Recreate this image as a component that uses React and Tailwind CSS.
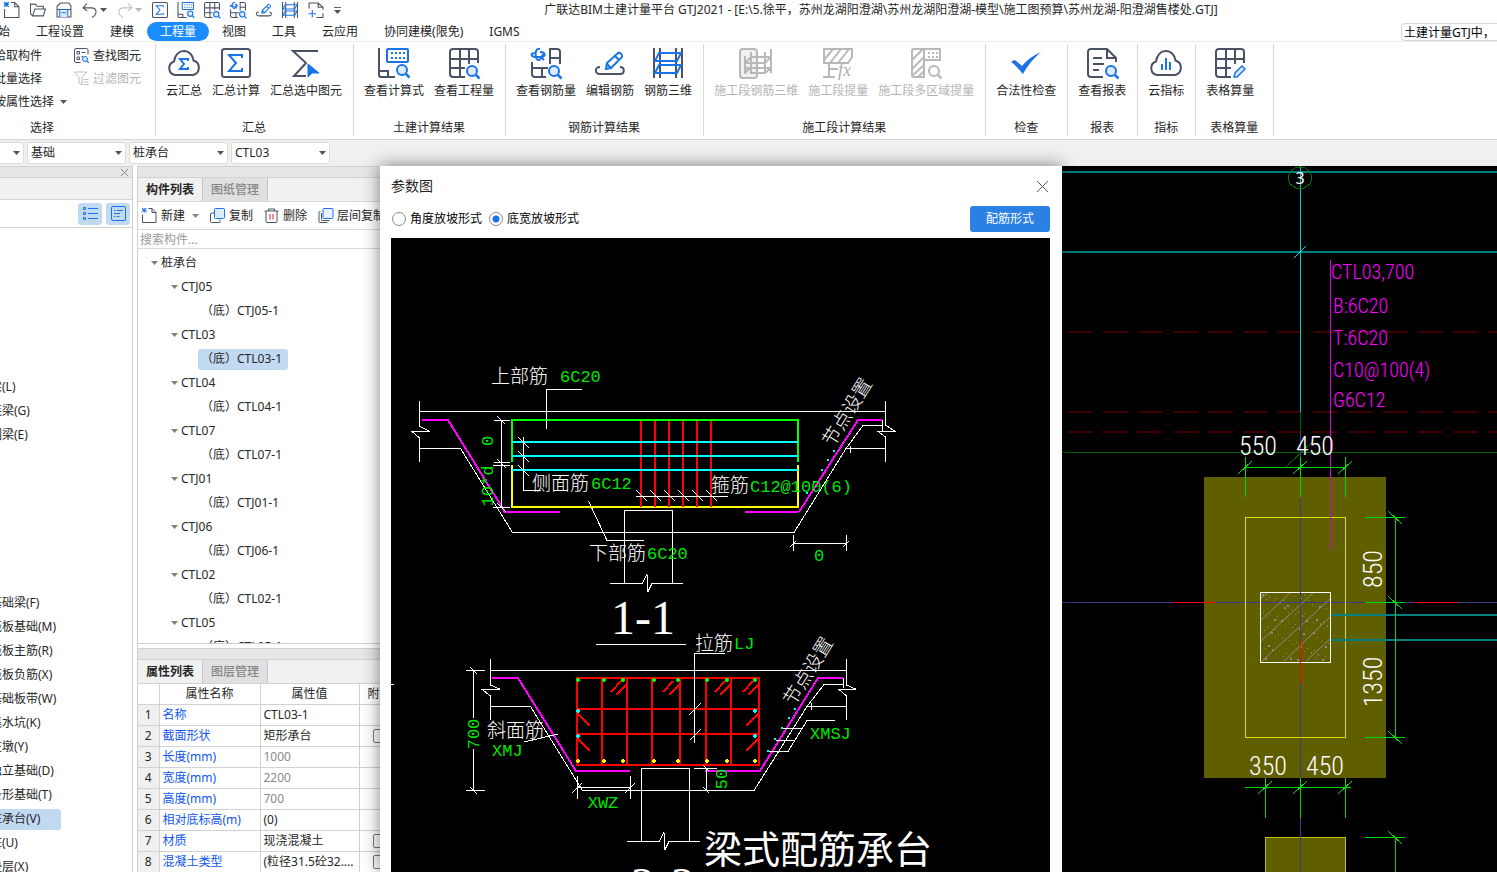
import { useState } from 'react';

const DARK = '#4b5266';
const BLUE = '#1a73e8';

function Icon({ size = 30, children, color = DARK }) {
  return (
    <svg width={size} height={size} viewBox="0 0 30 30" fill="none" stroke={color} strokeWidth="2" className="shrink-0 overflow-visible" aria-hidden="true">
      {children}
    </svg>
  );
}

function Caret({ color = '#555555' }) {
  return (
    <svg width="7" height="4" viewBox="0 0 7 4" className="shrink-0" aria-hidden="true">
      <path d="M0 0h7L3.500 4z" fill={color} />
    </svg>
  );
}

function Lens({ cx = 23, cy = 23, color = BLUE, fill = '#dcebff' }) {
  return (
    <g stroke={color}>
      <circle cx={cx} cy={cy} r="5" fill={fill} />
      <path d={`M${cx + 4} ${cy + 4}l3.500 3.500`} strokeWidth="2.500" />
    </g>
  );
}

const CLOUD = 'M6 27a7 7 0 0 1-1-13.500C6 7 10 3 15 3s9 4 9.500 9.500A7.500 7.500 0 0 1 24 27Z';
const GRID = 'M29 15V4a3 3 0 0 0-3-3H4a3 3 0 0 0-3 3v22a3 3 0 0 0 3 3h12M1 11h28M1 20h15M11 1v28M20 1v15';

const icons = {
  cloudSum: (p) => (
    <Icon {...p}>
      <path d={CLOUD} />
      <path d="M19 13v-2h-8l4 5-4 5h8v-2" stroke={BLUE} />
    </Icon>
  ),
  sum: (p) => (
    <Icon {...p}>
      <rect x="1" y="1" width="28" height="28" rx="2.500" />
      <path d="M21 10V7H8l7 8-7 8h13v-3" stroke={BLUE} />
    </Icon>
  ),
  sumSelect: (p) => (
    <Icon {...p}>
      <path d="M27 3H2l13 12L3 28h12" />
      <path d="M17 16v13l4-4h7z" fill={BLUE} stroke={BLUE} strokeWidth="1" />
    </Icon>
  ),
  formula: (p) => (
    <Icon {...p}>
      <path d="M0 0v27a2 2 0 0 0 2 2h14M1 23h8v6" />
      <rect x="8" y="1" width="21" height="13" rx="1" stroke={BLUE} />
      <path d="M12 5h15M12 10h15" stroke={BLUE} strokeDasharray="2 2" />
      <Lens cy={22} />
    </Icon>
  ),
  quantity: (p) => (
    <Icon {...p}>
      <path d={GRID} />
      <Lens />
    </Icon>
  ),
  rebarQuantity: (p) => (
    <Icon {...p}>
      <path d="M19 16V1h7a3 3 0 0 1 3 3v12M19 10h10M1 14v12a3 3 0 0 0 3 3h11M1 20h16M11 20v9" />
      <path d="M9 1C5 0 4 4 5 9c1 4 4 4 5 1M4 5C0 5-1 8 4 9h6M9 4c6 0 6 5 1 5l3-3M10 9l3 3" stroke={BLUE} />
      <Lens />
    </Icon>
  ),
  editRebar: (p) => (
    <Icon {...p}>
      <path d="M5 19c-6 0-5 7 0 7h20c5 0 5-7 0-7" />
      <path d="M11 21l1-6L23 5c2-1 5 2 4 4L16 20zM20 8l4 4M12 16l4 4" stroke={BLUE} />
    </Icon>
  ),
  rebar3d: (p) => (
    <Icon {...p}>
      <path d="M1 0v30M7 0v30M23 0v30M29 0v30" />
      <path d="M6 5h22l-4 8H2zM6 17h22l-4 8H2z" stroke={BLUE} />
    </Icon>
  ),
  stage3d: (p) => (
    <Icon {...p} color="#b8b8b8">
      <rect x="-1" y="1" width="17" height="29" rx="3" fill="#f0f0f0" />
      <path d="M4 8v18M10 4v22M24 4v22M30 1v24M4 15l6-6h20M4 20h26M4 25l6-6M4 15h10M30 9l-6 6H14M30 20l-6 5H10" />
    </Icon>
  ),
  stageFx: (p) => (
    <Icon {...p} color="#b8b8b8">
      <path d="M1 1h28v8l-4 6H1zM1 12L10 1M7 15L18 1M15 15L26 1M6 15v14M0 29h12M6 21h9" />
      <text x="15" y="28" fontSize="18" fontStyle="italic" fontFamily="Liberation Serif, serif" fill="#b0b0b0" stroke="none">fx</text>
    </Icon>
  ),
  stageArea: (p) => (
    <Icon {...p} color="#b8b8b8">
      <path d="M13 1H3a2 2 0 0 0-2 2v24a2 2 0 0 0 2 2h10zM13 1h16v11H13M1 12L12 1M1 21l12-12M1 28l12-11M7 29l6-6" />
      <path d="M17 5h10M17 9h10" strokeDasharray="2 2" />
      <Lens color="#b8b8b8" fill="#fff" />
    </Icon>
  ),
  check: (p) => (
    <Icon {...p}>
      <path d="M0 13.500 4 12l7 6C17 11 23 7 30 4 22 11 17 17 12 26 8 21 4 17 0 13.500Z" fill={BLUE} stroke="none" />
    </Icon>
  ),
  report: (p) => (
    <Icon {...p}>
      <path d="M29 14v-4l-9-9H4a3 3 0 0 0-3 3v22a3 3 0 0 0 3 3h12M20 1v9h9M6 10h9M6 16h11M6 22h6" />
      <Lens cx={24} />
    </Icon>
  ),
  cloudChart: (p) => (
    <Icon {...p}>
      <path d={CLOUD} />
      <path d="M11 22v-6M15 22V10M19 22v-8" stroke={BLUE} />
    </Icon>
  ),
  tableEdit: (p) => (
    <Icon {...p}>
      <path d={GRID} />
      <path d="M19 29l1-4 7-7 3 3-8 8z" stroke={BLUE} strokeWidth="1.500" fill="#dcebff" />
    </Icon>
  ),
  newFile: (p) => (
    <Icon {...p}>
      <path d="M1 13v16h27V9l-8-8h-7M20 1v8h8" />
      <path d="M0 0l9 9M9 0L0 9M4.500 0v9M0 4.500h9" stroke={BLUE} />
    </Icon>
  ),
  open: (p) => (
    <Icon {...p}>
      <path d="M5 26L1 22V4h9l3 4h12v5M5 26l4-13h20l-4 13z" />
    </Icon>
  ),
  save: (p) => (
    <Icon {...p}>
      <path d="M27 28H2V8l6-6h16l4 5v21zM2 14h26" />
      <path d="M7 28V14h15v14M10 20h9" stroke={BLUE} fill="#dcebff" />
    </Icon>
  ),
  undo: (p) => (
    <Icon {...p}>
      <path d="M9 3L2 11l8 6M2 11h15c12 0 12 12 2 18" />
    </Icon>
  ),
  redo: (p) => (
    <Icon {...p} color="#c4c4c4">
      <path d="M21 3l7 8-8 6M28 11H13C1 11 1 23 11 29" />
    </Icon>
  ),
  addFrame: (p) => (
    <Icon {...p}>
      <path d="M2 12V2h17l9 8v5M19 2v8h9M28 21v8H16" />
      <path d="M1 22h14M8 15v14" stroke={BLUE} />
    </Icon>
  ),
  find: (p) => (
    <Icon {...p}>
      <path d="M28 13V4a3 3 0 0 0-3-3H4a3 3 0 0 0-3 3v22a3 3 0 0 0 3 3h9M6 7h5v5H6zM15 9h8M6 18h5v5H6zM15 17h3" />
      <Lens cx={22} cy={22} />
    </Icon>
  ),
  filter: (p) => (
    <Icon {...p} color="#c0c0c0">
      <path d="M1 2h24L16 13v15l-6-4V13zM19 17h10M19 22h10M19 27h10" />
    </Icon>
  ),
  copy: (p) => (
    <Icon {...p}>
      <path d="M8 10H3a2 2 0 0 0-2 2v15a2 2 0 0 0 2 2h15a2 2 0 0 0 2-2v-4" />
      <rect x="9" y="1" width="20" height="20" rx="2" stroke={BLUE} fill="#dcebff" />
    </Icon>
  ),
  layerCopy: (p) => (
    <Icon {...p}>
      <path d="M5 7H3a2 2 0 0 0-1 2v18a2 2 0 0 0 2 2h15M7 10v13a2 2 0 0 0 2 2h14" />
      <rect x="10" y="1" width="20" height="20" rx="2" stroke={BLUE} fill="#eaf3ff" />
    </Icon>
  ),
  trash: (p) => (
    <Icon {...p}>
      <path d="M1 6h28M9 6V2h12v4M4 6v21a2 2 0 0 0 2 2h18a2 2 0 0 0 2-2V6" />
      <path d="M12 12v11M18 12v11" stroke="#d9202a" />
    </Icon>
  ),
  list: (p) => (
    <Icon {...p} color={BLUE}>
      <path d="M10 5h20M10 15h20M10 25h20M1 3h4v4H1zM1 13h4v4H1zM1 23h4v4H1z" />
    </Icon>
  ),
  card: (p) => (
    <Icon {...p} color={BLUE}>
      <rect x="1" y="1" width="28" height="28" rx="3" />
      <path d="M6 9h3M12 9h12M6 15h12M6 21h3M12 21h5" />
    </Icon>
  ),
};

const menuTabs = ['开始', '工程设置', '建模', '工程量', '视图', '工具', '云应用', '协同建模(限免)', 'IGMS'];

const ribbonGroups = [
  { title: '汇总', items: [['cloudSum', '云汇总'], ['sum', '汇总计算'], ['sumSelect', '汇总选中图元']] },
  { title: '土建计算结果', items: [['formula', '查看计算式'], ['quantity', '查看工程量']] },
  { title: '钢筋计算结果', items: [['rebarQuantity', '查看钢筋量'], ['editRebar', '编辑钢筋'], ['rebar3d', '钢筋三维']] },
  { title: '施工段计算结果', disabled: true, items: [['stage3d', '施工段钢筋三维'], ['stageFx', '施工段提量'], ['stageArea', '施工段多区域提量']] },
  { title: '检查', items: [['check', '合法性检查']] },
  { title: '报表', items: [['report', '查看报表']] },
  { title: '指标', items: [['cloudChart', '云指标']] },
  { title: '表格算量', wide: true, items: [['tableEdit', '表格算量']] },
];

const filters = [
  { label: '楼层', value: '基础层' },
  { label: '分类', value: '基础' },
  { label: '构件类型', value: '桩承台' },
  { label: '构件', value: 'CTL03' },
];

const beams = ['梁(L)', '连梁(G)', '圈梁(E)'];
const foundations = [
  '基础梁(F)', '筏板基础(M)', '筏板主筋(R)', '筏板负筋(X)', '基础板带(W)', '集水坑(K)',
  '柱墩(Y)', '独立基础(D)', '条形基础(T)', '桩承台(V)', '桩(U)', '垫层(X)',
];

const components = ['CTJ05', 'CTL03', 'CTL04', 'CTL07', 'CTJ01', 'CTJ06', 'CTL02', 'CTL05'];

const properties = [
  { name: '名称', value: 'CTL03-1' },
  { name: '截面形状', value: '矩形承台', extra: true },
  { name: '长度(mm)', value: '1000', muted: true },
  { name: '宽度(mm)', value: '2200', muted: true },
  { name: '高度(mm)', value: '700', muted: true },
  { name: '相对底标高(m)', value: '(0)' },
  { name: '材质', value: '现浇混凝土', extra: true },
  { name: '混凝土类型', value: '(粒径31.5砼32....', extra: true },
];

function QuickButton({ name, label }) {
  const Glyph = icons[name];
  return (
    <button type="button" aria-label={label}>
      <Glyph size={16} />
    </button>
  );
}

function TitleBar() {
  return (
    <header className="flex h-[22px] items-center pb-[2px] pl-1">
      <div className="flex items-center gap-[10px]">
        <QuickButton name="newFile" label="新建" />
        <QuickButton name="open" label="打开" />
        <QuickButton name="save" label="保存" />
        <span className="flex items-center gap-[2px]">
          <QuickButton name="undo" label="撤销" />
          <Caret />
        </span>
        <span className="flex items-center gap-[2px]">
          <QuickButton name="redo" label="恢复" />
          <Caret color="#b5b5b5" />
        </span>
        <QuickButton name="sum" label="汇总计算" />
        <QuickButton name="formula" label="查看计算式" />
        <QuickButton name="quantity" label="查看工程量" />
        <QuickButton name="rebarQuantity" label="查看钢筋量" />
        <QuickButton name="editRebar" label="编辑钢筋" />
        <QuickButton name="rebar3d" label="钢筋三维" />
        <QuickButton name="addFrame" label="添加" />
        <span className="flex flex-col gap-[2px]">
          <span className="h-px w-[7px] bg-[#666]" />
          <Caret />
        </span>
      </div>
      <h1 className="flex-1 truncate pr-[76px] text-center">
        广联达BIM土建计量平台 GTJ2021 - [E:\5.徐平，苏州龙湖阳澄湖\苏州龙湖阳澄湖-模型\施工图预算\苏州龙湖-阳澄湖售楼处.GTJ]
      </h1>
    </header>
  );
}

function MenuTabs({ active, onSelect }) {
  return (
    <nav className="flex h-5 items-center justify-between border-b border-[#ececec]">
      <div className="-ml-[27px] flex">
        {menuTabs.map((tab) => (
          <button
            key={tab}
            type="button"
            onClick={() => onSelect(tab)}
            className={`h-[19px] rounded-full px-[13px] ${tab === active ? 'bg-[#1a8cff] text-white' : ''}`}
          >
            {tab}
          </button>
        ))}
      </div>
      <input
        aria-label="搜索"
        defaultValue="土建计量GTJ中，"
        className="h-[18px] w-24 rounded-l-sm border border-r-0 border-[#d9d9d9] pl-[2px] text-black outline-none"
      />
    </nav>
  );
}

function Ribbon() {
  return (
    <section className="flex h-[98px] items-start border-b border-[#d5d5d5] pt-[2px]">
      <div className="flex h-[92px] w-[156px] shrink-0 flex-col justify-between border-r border-[#d9d9d9]">
        <div className="-ml-[6px] flex">
          <div className="flex w-[80px] flex-col items-start">
            <button type="button" className="h-[23px]">拾取构件</button>
            <button type="button" className="h-[23px]">批量选择</button>
            <button type="button" className="flex h-[23px] items-center gap-[6px]">
              按属性选择 <Caret />
            </button>
          </div>
          <div className="flex flex-col items-start">
            <button type="button" className="flex h-[23px] items-center gap-1">
              <icons.find size={15} /> 查找图元
            </button>
            <button type="button" disabled className="flex h-[23px] items-center gap-1 text-[#b5b5b5]">
              <icons.filter size={15} /> 过滤图元
            </button>
          </div>
        </div>
        <p className="pl-[30px]">选择</p>
      </div>

      {ribbonGroups.map((group) => (
        <div
          key={group.title}
          className={`flex h-[92px] shrink-0 flex-col justify-between border-r border-[#d9d9d9] pt-1 pr-[11px] pl-[10px] ${group.wide ? 'w-[78px]' : ''}`}
        >
          <div className="flex gap-[10px]">
            {group.items.map(([name, label]) => {
              const Glyph = icons[name];
              return (
                <button
                  key={label}
                  type="button"
                  disabled={group.disabled}
                  className={`flex flex-col items-center gap-[5px] ${group.disabled ? 'text-[#b5b5b5]' : ''}`}
                >
                  <Glyph />
                  {label}
                </button>
              );
            })}
          </div>
          <p className="text-center">{group.title}</p>
        </div>
      ))}
    </section>
  );
}

function FilterBar() {
  return (
    <section className="flex h-[26px] items-center bg-[#f0f0f0]">
      <div className="-ml-[75px] flex gap-[3px]">
        {filters.map((f) => (
          <label key={f.label} className="relative block">
            <select
              aria-label={f.label}
              className="h-[22px] w-[99px] appearance-none rounded-[3px] border border-[#dcdcdc] bg-white pl-[3px] outline-none"
            >
              <option>{f.value}</option>
            </select>
            <span className="pointer-events-none absolute top-[9px] right-1">
              <Caret />
            </span>
          </label>
        ))}
      </div>
    </section>
  );
}

function NavItem({ label, selected }) {
  return (
    <li className="flex h-6 items-center">
      <button
        type="button"
        className={`-ml-[10px] h-[21px] rounded-[3px] ${selected ? 'w-[71px] bg-[#c2d9f2] text-left' : ''}`}
      >
        {label}
      </button>
    </li>
  );
}

function Sidebar() {
  return (
    <aside className="flex w-[133px] shrink-0 flex-col overflow-hidden border-r border-[#cfcfcf]">
      <div className="flex h-3 shrink-0 items-center justify-end border-y border-[#d2d2d2] bg-[#e6e6e6] pr-1">
        <button type="button" aria-label="关闭">
          <svg width="7" height="7" viewBox="0 0 7 7" stroke="#888" aria-hidden="true">
            <path d="M0 0l7 7M7 0L0 7" />
          </svg>
        </button>
      </div>
      <div className="h-[22px] shrink-0 border-b border-[#d2d2d2] bg-[#f1f1f1]" />
      <div className="flex h-7 shrink-0 items-center justify-end gap-1 border-b border-[#d2d2d2] pr-[2px]">
        <button type="button" aria-label="列表" className="flex h-[22px] w-6 items-center justify-center rounded-[3px] bg-[#c2d9f2]">
          <icons.list size={15} />
        </button>
        <button type="button" aria-label="卡片" className="flex h-[22px] w-6 items-center justify-center rounded-[3px] bg-[#c2d9f2]">
          <icons.card size={15} />
        </button>
      </div>
      <ul className="pt-[147px]">
        {beams.map((b) => <NavItem key={b} label={b} />)}
      </ul>
      <ul className="pt-36">
        {foundations.map((f) => <NavItem key={f} label={f} selected={f === '桩承台(V)'} />)}
      </ul>
    </aside>
  );
}

function PanelTabs({ first, second }) {
  return (
    <>
      <div className="h-3 shrink-0 border-y border-[#d2d2d2] bg-[#e6e6e6]" />
      <div className="flex h-[23px] shrink-0 bg-[#f1f1f1]">
        <button type="button" className="w-[65px] border-r border-[#c4c4cc] bg-[#f1f1f1] font-bold">{first}</button>
        <button type="button" className="w-[65px] border-r border-[#c4c4cc] bg-[#e0e0e0] font-medium text-[#888]">{second}</button>
      </div>
    </>
  );
}

function ToolButton({ name, label, caret }) {
  const Glyph = icons[name];
  return (
    <button type="button" className="flex shrink-0 items-center gap-1">
      <Glyph size={15} />
      {label}
      {caret && <span className="pl-[3px]"><Caret color="#888888" /></span>}
    </button>
  );
}

function ComponentTree() {
  const [selected, setSelected] = useState('CTL03');

  return (
    <div className="flex min-h-0 flex-1 flex-col overflow-hidden border-b border-[#cfcfcf]">
      <PanelTabs first="构件列表" second="图纸管理" />
      <div className="flex h-[29px] shrink-0 items-center gap-[11px] border-y border-[#d9d9d9] pl-1 whitespace-nowrap">
        <ToolButton name="newFile" label="新建" caret />
        <ToolButton name="copy" label="复制" />
        <ToolButton name="trash" label="删除" />
        <ToolButton name="layerCopy" label="层间复制" />
      </div>
      <input
        aria-label="搜索构件"
        placeholder="搜索构件..."
        className="h-[19px] shrink-0 border-b border-[#d9d9d9] pl-[2px] outline-none placeholder:text-[#999]"
      />
      <ul className="pt-[2px]">
        <li>
          <span className="flex h-6 items-center gap-[3px] pl-[13px]">
            <Caret color="#808080" /> 桩承台
          </span>
          <ul>
            {components.map((c) => (
              <li key={c}>
                <span className="flex h-6 items-center gap-[3px] pl-[33px]">
                  <Caret color="#808080" /> {c}
                </span>
                <div className="flex h-6 items-center pl-[60px]">
                  <button
                    type="button"
                    onClick={() => setSelected(c)}
                    className={`h-[21px] w-[90px] rounded-[3px] pl-[3px] text-left whitespace-nowrap ${c === selected ? 'bg-[#c2d9f2]' : ''}`}
                  >
                    （底）{c}-1
                  </button>
                </div>
              </li>
            ))}
          </ul>
        </li>
      </ul>
    </div>
  );
}

function PropertyTable() {
  return (
    <div className="flex h-[224px] shrink-0 flex-col overflow-hidden">
      <PanelTabs first="属性列表" second="图层管理" />
      <table className="w-[261px] table-fixed border-collapse border-t border-[#d2d2d2]">
        <thead>
          <tr className="h-[21px]">
            <th className="w-[21px] border-r border-b border-[#d2d2d2]" />
            <th className="w-[101px] border-r border-b border-[#d2d2d2] font-normal">属性名称</th>
            <th className="w-[99px] border-r border-b border-[#d2d2d2] font-normal">属性值</th>
            <th className="w-[40px] border-b border-[#d2d2d2] pl-[8px] text-left font-normal">附加</th>
          </tr>
        </thead>
        <tbody>
          {properties.map((p, i) => (
            <tr key={p.name} className="h-[21px]">
              <td className="border-r border-b border-[#d2d2d2] bg-[#f0f0f0] text-center">{i + 1}</td>
              <td className="border-r border-b border-[#d2d2d2] pl-[3px] text-[#0f56f0]">{p.name}</td>
              <td className={`border-r border-b border-[#d2d2d2] pl-[3px] whitespace-nowrap ${p.muted ? 'text-[#8a8a8a]' : ''}`}>{p.value}</td>
              <td className="border-b border-[#d2d2d2] pl-[13px]">
                {p.extra && (
                  <input
                    type="checkbox"
                    aria-label={`附加${p.name}`}
                    className="block h-[14px] w-[14px] appearance-none rounded-[2px] border border-[#777] bg-white"
                  />
                )}
              </td>
            </tr>
          ))}
        </tbody>
      </table>
    </div>
  );
}

const CJK = 'Noto Sans CJK SC, sans-serif';
const MONO = 'Liberation Mono, monospace';
const NARROW = 'Liberation Sans Narrow, Roboto Condensed, Roboto, sans-serif';

// y is the middle of the line of text
function Note({ x, y, children, fill = '#fff', size = 19, font = CJK, rotate = 0, anchor = 'start', weight = 300 }) {
  return (
    <text
      x={x}
      y={y}
      dy="0.36em"
      fill={fill}
      stroke="none"
      fontSize={size}
      fontFamily={font}
      fontWeight={weight}
      textAnchor={anchor}
      transform={rotate ? `rotate(${rotate} ${x} ${y})` : undefined}
    >
      {children}
    </text>
  );
}

function Value(props) {
  return <Note fill="#00e600" size={17} font={MONO} {...props} />;
}

function Dots({ points, fill, r = 2 }) {
  return points.map(([x, y]) => (
    <path key={`${x}-${y}`} d={`M${x - r} ${y}l${r} ${-r} ${r} ${r} ${-r} ${r}z`} fill={fill} stroke={fill} strokeWidth="1" />
  ));
}

const barXs = [641, 655, 669, 683, 697, 711];
const mainXs = [578, 604, 623, 654, 678, 707, 727, 755];

function LongSection() {
  return (
    <g strokeWidth="1" stroke="#fff" fill="none" shapeRendering="crispEdges">
      <path d="M419.500 411.500H885.500M419.500 401v25l9 5h-17l8 7v24M885.500 401v24l9 6h-17l8 6v25M882.500 420v11" />
      <path d="M419.500 448.500h41l52 84H794l52-84h39.500M846 448.500l17-23h19M850 446v7" />
      <g stroke="#f0f" strokeWidth="2">
        <path d="M422 420h26l57 92h55M745 512h53M799 512l59-92h24" />
      </g>
      <path d="M512 462V420H798V462" stroke="#0f0" strokeWidth="2" />
      <path d="M512 465V507H798V465" stroke="#ff0" strokeWidth="2" />
      {barXs.map((x) => (
        <path key={x} d={`M${x} 421V507`} stroke="#f00" strokeWidth="2" />
      ))}
      <path d="M512 442H798M512 456H798M512 470H798" stroke="#0ff" strokeWidth="2" />
      {barXs.map((x) => (
        <path key={x} d={`M${x - 5} 490l11 11`} />
      ))}
      <path d="M636 496.500h92" />
      <path d="M582 389.500H546.500V429M501.500 420V507M494 420.500h16M494 462.500h16M493 465.500h17M493 507.500h17M497 416l8 8M497 459l9 9M497 503l9 9" />
      <path d="M523.500 437v53.500H541M518 437l11 11M518 451l11 11M518 465l11 11" />
      <path d="M588.500 501l18.500 39.500h37" />
      <path d="M624.500 583V510.500h48V583M610 583.500h32l5-9 1 17 4-8h31" />
      <path d="M793.500 535v16M846.500 535v16M794 543.500h52M790 547l6-6M843 547l6-6" />
      <Dots points={[[834, 451], [828, 460], [822, 470], [814, 482], [807, 493]]} fill="#0ff" r={1} />

      <Note x={491} y={376}>上部筋</Note>
      <Value x={560} y={376}>6C20</Value>
      <Note x={532} y={483}>侧面筋</Note>
      <Value x={591} y={483}>6C12</Value>
      <Note x={589} y={553}>下部筋</Note>
      <Value x={647} y={553}>6C20</Value>
      <Note x={711} y={485}>箍筋</Note>
      <Value x={750} y={486}>C12@100(6)</Value>
      <Note x={847} y={412} rotate={-58} anchor="middle">节点设置</Note>
      <Value x={487} y={441} rotate={-90} anchor="middle">0</Value>
      <Value x={487} y={486} rotate={-90} anchor="middle">10*d</Value>
      <Value x={819} y={555} anchor="middle">0</Value>
      <Note x={643} y={617} size={48} font="Liberation Serif, serif" anchor="middle">1-1</Note>
      <path d="M596 644.500h90" />
    </g>
  );
}

function CrossSection() {
  return (
    <g strokeWidth="1" stroke="#fff" fill="none" shapeRendering="crispEdges">
      <path d="M490.500 670.500H847M490.500 659v26l9 4h-18l9 7v24M846.500 659v26l9 4h-17l8 7v24M843.500 678v10" />
      <path d="M490.500 706.500h40l52 84H754l53-84h40M807 706.500l17-22h20M811 703v7" />
      <path d="M473.500 670v48M473.500 749v41M466 670.500h19M466 790.500h19M470 667l7 7M470 787l7 7M391 684.500h3" />
      <path d="M492 678h26l58 93h54M705 771h55l58-93h25" stroke="#f0f" strokeWidth="2" />
      <g stroke="#f00" strokeWidth="2">
        <path d="M577 678H759V765H577ZM577 709H759M577 734H759M602 678v87M627 678v87M652 678v87M680 678v87M706 678v87M731 678v87" />
        <path d="M621 681l-10 11M627 684l-11 11M673 681l-10 11M680 684l-11 11M725 681l-10 11M731 684l-11 11M753 681l-10 11M759 684l-11 11" />
        <path d="M578 714l12 12M578 739l12 12M758 714l-12 12M758 739l-12 12" />
      </g>
      <Dots points={mainXs.map((x) => [x, 680])} fill="#0f0" />
      <Dots points={mainXs.map((x) => [x, 761])} fill="#ff0" />
      <Dots points={[[578, 711], [578, 736], [755, 711], [755, 736]]} fill="#0ff" />
      <path d="M524 742l34-8M577.500 776v23M630.500 776v23M577 787.500h53M572 793l10-10M625 793l10-10" />
      <path d="M641.500 841V768.500h48V841M627 841.500h32l5-9 1 17 4-8h31" />
      <path d="M725 653.500H694.500V743M689 715l12-12M690 740l11-11M706.500 768v22M694 768.500h23M703 765l6 6M703 787l6 6" />
      <path d="M835 720.500H807L788 751.500H769M802 728.500H783M795 740.500H776" />
      <Dots points={[[795, 709], [789, 718], [782, 728], [775, 739], [768, 751]]} fill="#0ff" r={1} />

      <Note x={695} y={643}>拉筋</Note>
      <Value x={734} y={643}>LJ</Value>
      <Note x={487} y={730}>斜面筋</Note>
      <Value x={492} y={750}>XMJ</Value>
      <Value x={473} y={734} rotate={-90} anchor="middle">700</Value>
      <Value x={603} y={802} anchor="middle">XWZ</Value>
      <Value x={721} y={779} rotate={-90} anchor="middle">50</Value>
      <Value x={810} y={733}>XMSJ</Value>
      <Note x={808} y={671} rotate={-58} anchor="middle">节点设置</Note>
      <Note x={704} y={849} size={38} weight={400}>梁式配筋承台</Note>
      <Note x={663} y={884} size={48} font="Liberation Serif, serif" anchor="middle">2-2</Note>
    </g>
  );
}

function ParameterDialog() {
  const [slope, setSlope] = useState('width');
  const options = [
    { id: 'angle', label: '角度放坡形式' },
    { id: 'width', label: '底宽放坡形式' },
  ];

  return (
    <section
      role="dialog"
      aria-labelledby="dialog-title"
      className="relative z-10 flex w-[682px] shrink-0 flex-col bg-white pr-3 pl-[11px] shadow-[0_0_16px_rgba(0,0,0,0.5)]"
    >
      <div className="flex h-10 shrink-0 items-center justify-between pr-[2px]">
        <h2 id="dialog-title" className="text-sm">参数图</h2>
        <button type="button" aria-label="关闭">
          <svg width="11" height="11" viewBox="0 0 11 11" stroke="#555" aria-hidden="true">
            <path d="M0 0l11 11M11 0L0 11" />
          </svg>
        </button>
      </div>
      <div className="flex h-8 shrink-0 items-start justify-between text-black">
        <div className="flex h-[26px] items-center gap-[7px] pl-px">
          {options.map((o) => (
            <label key={o.id} className="flex items-center gap-1">
              <input
                type="radio"
                name="slope"
                checked={slope === o.id}
                onChange={() => setSlope(o.id)}
                className="h-[14px] w-[14px] appearance-none rounded-full border border-[#8a8a8a] bg-white checked:bg-[radial-gradient(circle,#1a73e8_3px,white_4px)]"
              />
              {o.label}
            </label>
          ))}
        </div>
        <button type="button" className="h-[26px] w-20 rounded-[3px] bg-[#2b80e4] text-white">配筋形式</button>
      </div>
      <div className="min-h-0 flex-1 overflow-hidden bg-black">
        <svg width="659" height="634" viewBox="391 238 659 634" role="img" aria-label="梁式配筋承台参数图">
          <LongSection />
          <CrossSection />
        </svg>
      </div>
    </section>
  );
}

const specks = Array.from({ length: 90 }, (_, i) => [
  1262 + ((i * 37) % 67),
  594 + ((i * 23 + (i % 7) * 11) % 66),
  i % 5 === 0 ? 2 : 1,
]);

const leaderLines = [
  [1331, 272, 'CTL03,700'],
  [1333, 306, 'B:6C20'],
  [1333, 338, 'T:6C20'],
  [1333, 370, 'C10@100(4)'],
  [1333, 400, 'G6C12'],
];

function PlanDrawing() {
  return (
    <main className="min-w-0 flex-1 overflow-hidden bg-black">
      <svg width="435" height="706" viewBox="1062 166 435 706" fill="none" shapeRendering="crispEdges" role="img" aria-label="平面图">
        <path d="M1068 332h430M1068 412h430M1068 432h430" stroke="#3c0000" strokeWidth="2" strokeDasharray="25 10" />
        <path d="M1062 172h435M1062 252h435" stroke="#008080" strokeWidth="2" />
        <path d="M1300.500 166V412" stroke="#00c8c8" />
        <path d="M1294 258l12-12" stroke="#00e0e0" />
        <path d="M1062 452.500h435M1286 467l28-27M1300.500 412v40" stroke="#006400" />
        <path d="M1296 167.500h8l6 4 2 6.500-2 6-6 4h-8l-6-4-2-6 2-6.500z" stroke="#007000" />
        <rect x="1204" y="477" width="182" height="301" fill="#605f00" />
        <path d="M1265.500 873V837.500h80V873" fill="#605f00" stroke="#c0c000" />
        <path d="M1062 602.500h435M1300.500 433V873" stroke="#3a3a8c" />
        <path d="M1173 602.500h42M1415 602.500h43" stroke="#f00" />
        <rect x="1245.500" y="517.500" width="100" height="220" stroke="#e0e000" />
        <g stroke="#8a8a8a" shapeRendering="auto">
          <path d="M1260 599l8-6M1260 621l30-28M1260 642l53-49M1262 661l68-62M1284 661l46-44M1306 661l24-22" />
          {specks.map(([x, y, s], i) => (
            <rect key={i} x={x} y={y} width={s} height={s} fill="#8a8a8a" stroke="none" />
          ))}
        </g>
        <rect x="1260.500" y="592.500" width="70" height="70" stroke="#fff" />
        <path d="M1300.500 592v70" stroke="#3a3a8c" />
        <path d="M1300.500 641v42" stroke="#f00" />
        <path d="M1331 615h166M1331 640h166" stroke="#008080" strokeWidth="2" />
        <path d="M1330.500 260v290" stroke="#d800d8" />

        <g stroke="#00d800">
          <path d="M1245 467.500h101M1245.500 457v40M1300.500 457v40M1345.500 457v40" />
          <path d="M1238 474l14-13M1293 474l14-13M1338 474l14-13" />
          <path d="M1245 787.500h106M1265.500 778v40M1300.500 778v40M1345.500 778v40" />
          <path d="M1258 794l14-13M1293 794l14-13M1338 794l14-13" />
          <path d="M1365 517.500h40M1365 602.500h40M1365 737.500h40M1365 837.500h40M1395.500 517v221M1395.500 837v36" />
          <path d="M1388 511l14 13M1388 596l14 13M1388 731l14 13M1388 831l14 13" />
        </g>

        {leaderLines.map(([x, y, text]) => (
          <Note key={text} x={x} y={y} fill="#f0f" size={20} font={NARROW}>{text}</Note>
        ))}
        <Note x={1300} y={178} size={16} font="Noto Sans, sans-serif" anchor="middle" weight={400}>3</Note>
        <Note x={1258} y={446} size={26} font={NARROW} anchor="middle">550</Note>
        <Note x={1315} y={446} size={26} font={NARROW} anchor="middle">450</Note>
        <Note x={1268} y={766} size={26} font={NARROW} anchor="middle">350</Note>
        <Note x={1325} y={766} size={26} font={NARROW} anchor="middle">450</Note>
        <Note x={1373} y={569} size={26} font={NARROW} anchor="middle" rotate={-90}>850</Note>
        <Note x={1373} y={682} size={26} font={NARROW} anchor="middle" rotate={-90}>1350</Note>
      </svg>
    </main>
  );
}

function App() {
  const [activeTab, setActiveTab] = useState('工程量');

  return (
    <div className="flex h-screen flex-col overflow-hidden bg-white font-['Noto_Sans','Noto_Sans_CJK_SC',sans-serif] text-xs text-[#262626]">
      <TitleBar />
      <MenuTabs active={activeTab} onSelect={setActiveTab} />
      <Ribbon />
      <FilterBar />
      <div className="flex min-h-0 flex-1">
        <Sidebar />
        <div className="ml-1 flex w-[243px] shrink-0 flex-col gap-1 overflow-hidden border-l border-[#cfcfcf]">
          <ComponentTree />
          <PropertyTable />
        </div>
        <ParameterDialog />
        <PlanDrawing />
      </div>
    </div>
  );
}

export default App;
